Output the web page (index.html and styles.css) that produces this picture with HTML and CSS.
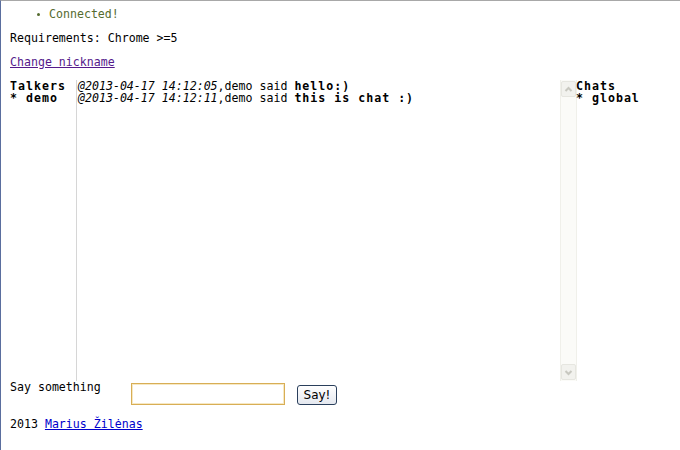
FILE: index.html
```html
<!DOCTYPE html>
<html>
<head>
<meta charset="utf-8">
<link rel="stylesheet" href="styles.css">
</head>
<body>
<div class="frame">
  <ul class="status"><li>Connected!</li></ul>
  <p class="line">Requirements: Chrome &gt;=5</p>
  <p class="line"><a class="visited" href="#">Change nickname</a></p>
  <div class="chat">
    <div class="talkers">
      <div class="b">Talkers</div>
      <div class="b">* demo</div>
    </div>
    <div class="messages">
      <div class="log">
        <div><i>@2013-04-17 14:12:05</i>,demo said <b>hello:)</b></div>
        <div><i>@2013-04-17 14:12:11</i>,demo said <b>this is chat :)</b></div>
      </div>
      <div class="scrollbar">
        <div class="arrow up"><svg width="13" height="13" viewBox="0 0 13 13"><path d="M3.5 8 L6.5 5 L9.5 8" fill="none" stroke="#c8c8c0" stroke-width="2"/></svg></div>
        <div class="track"></div>
        <div class="arrow down"><svg width="13" height="13" viewBox="0 0 13 13"><path d="M3.5 5 L6.5 8 L9.5 5" fill="none" stroke="#c8c8c0" stroke-width="2"/></svg></div>
      </div>
    </div>
    <div class="chats">
      <div class="b">Chats</div>
      <div class="b">* global</div>
    </div>
  </div>
  <div class="say">
    <span class="label">Say something</span>
    <input class="input" type="text">
    <button class="btn">Say!</button>
  </div>
  <p class="footer">2013 <a class="link" href="#">Marius Žilėnas</a></p>
</div>
</body>
</html>
```
FILE: styles.css
```css
html, body {
  margin: 0;
  padding: 0;
  background: #fff;
}
body {
  font-family: "DejaVu Sans Mono", monospace;
  font-size: 11.6px;
  line-height: 12px;
  color: #000;
}
.frame {
  width: 680px;
  height: 450px;
  box-sizing: border-box;
  border-top: 1px solid #a8a8a8;
  border-left: 1px solid #5a6e9e;
  padding: 7px 0 0 9px;
}
.status {
  margin: 0;
  padding: 0 0 0 39px;
  color: #556b2f;
  list-style: none;
}
.status li {
  position: relative;
}
.status li::before {
  content: "";
  position: absolute;
  left: -12px;
  top: 5px;
  width: 3px;
  height: 3px;
  border-radius: 50%;
  background: #556b2f;
}
.line {
  margin: 12px 0 0;
}
a.visited {
  color: #551a8b;
}
.link {
  color: #0000cc;
}
b, .b {
  font-weight: bold;
  letter-spacing: 1px;
}
i {
  font-style: italic;
}
.chat {
  display: flex;
  margin-top: 12px;
  height: 301px;
}
.talkers {
  width: 66px;
}
.messages {
  width: 500px;
  display: flex;
  border-left: 1px solid #d6d6d6;
}
.log {
  flex: 1;
  padding-left: 1px;
}
.scrollbar {
  width: 15px;
  display: flex;
  flex-direction: column;
  background: #fbfbf8;
  border-left: 1px solid #f0f0ea;
  border-right: 1px solid #f0f0ea;
}
.arrow {
  height: 14px;
  margin: 1px 0;
  display: flex;
  align-items: center;
  justify-content: center;
  background: #f2f2ee;
  border: 1px solid #e6e6e0;
  border-radius: 2px;
}
.track {
  flex: 1;
}
.chats {
  margin-left: -1px;
}
.say {
  display: flex;
  align-items: flex-start;
}
.label {
  width: 121px;
}
.input {
  width: 154px;
  height: 22px;
  box-sizing: border-box;
  margin: 2px 0 0;
  border: 1px solid #d8ae55;
  box-shadow: inset 0 0 0 1px #f6e8c4;
  padding: 0;
  outline: none;
}
.btn {
  margin: 4px 0 0 12px;
  width: 40px;
  height: 20px;
  box-sizing: border-box;
  padding: 0;
  border: 1px solid #2a3f5c;
  border-radius: 3px;
  background: linear-gradient(#ffffff, #e4e8ef);
  font-family: "DejaVu Sans", Tahoma, sans-serif;
  font-size: 12px;
  color: #000;
}
.footer {
  margin: 13px 0 0;
}
```
